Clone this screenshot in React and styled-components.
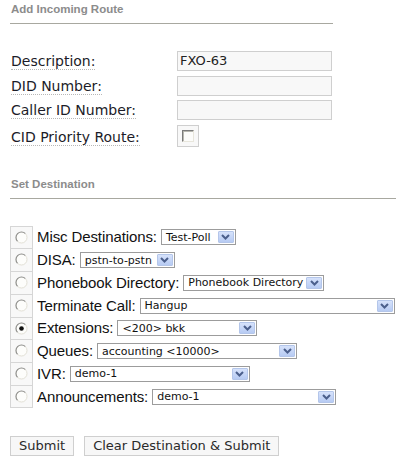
import React from 'react';
import styled, { createGlobalStyle } from 'styled-components';

const GlobalStyle = createGlobalStyle`
  body {
    margin: 0;
    background: #fff;
    font-family: "DejaVu Sans", Verdana, sans-serif;
  }
`;

const Page = styled.div`
  padding: 0 10px;
  width: 416px;
  box-sizing: border-box;
`;

const SectionTitle = styled.div`
  width: ${({ $width }) => $width}px;
  margin-top: ${({ $top }) => $top}px;
  padding: 2px 0 7px 1px;
  line-height: 14px;
  font-family: "Liberation Sans", Arial, sans-serif;
  font-weight: bold;
  font-size: 11.5px;
  color: #8c8c8c;
  border-bottom: 1px solid #a8a8a0;
`;

const FormGrid = styled.div`
  display: grid;
  grid-template-columns: 167px 155px;
  row-gap: 4.5px;
  margin-top: 27px;
  align-items: end;
`;

const Label = styled.span`
  justify-self: start;
  font-size: 14px;
  line-height: 15px;
  color: #1c1c28;
  border-bottom: 1px dotted #b8b8b8;
  margin-left: 1px;
  margin-bottom: 1px;
`;

const TextBox = styled.div`
  height: 20px;
  box-sizing: border-box;
  border: 1px solid #cfcfcf;
  background: #f8f8f8;
  font-size: 13px;
  line-height: 18px;
  padding-left: 2px;
  color: #222;
`;

const CheckWrap = styled.div`
  width: 22px;
  height: 22px;
  box-sizing: border-box;
  border: 1px solid #cfcfcf;
  background: #f8f8f8;
  display: flex;
  align-items: center;
  justify-content: center;
`;

const CheckBox = styled.span`
  width: 12px;
  height: 12px;
  box-sizing: border-box;
  border-top: 1px solid #7a7a7a;
  border-left: 1px solid #7a7a7a;
  border-right: 1px solid #e8e6dc;
  border-bottom: 1px solid #e8e6dc;
  background: #fcfcfa;
  box-shadow: inset 1px 1px 0 #b8b8b0;
  margin-top: 1px;
`;

const DestTable = styled.div`
  margin-top: 27px;
  display: flex;
  flex-direction: column;
`;

const DestRow = styled.div`
  display: flex;
  align-items: stretch;
  height: 22.75px;
`;

const RadioCell = styled.div`
  width: 23px;
  flex-shrink: 0;
  box-sizing: border-box;
  border: 1px solid #d6d6d6;
  border-bottom: ${({ $last }) => ($last ? '1px solid #d6d6d6' : 'none')};
  background: #f8f8f8;
  display: flex;
  justify-content: center;
  padding-top: 4px;
`;

const DestCell = styled.div`
  display: flex;
  align-items: center;
  padding-left: 4px;
  white-space: nowrap;
`;

const DestLabel = styled.span`
  font-family: "Liberation Sans", Arial, sans-serif;
  font-size: 15px;
  color: #111;
  margin-right: 4px;
  letter-spacing: -0.1px;
  flex-shrink: 0;
`;

const Select = styled.div`
  width: ${({ $width }) => $width}px;
  flex-shrink: 0;
  height: 16px;
  box-sizing: border-box;
  border: 1px solid #9c9c9c;
  background: #fff;
  display: flex;
  align-items: center;
  justify-content: space-between;
  font-size: 11px;
  color: #111;
  padding-left: 4px;
  margin-top: 1px;
`;

const Arrow = styled.span`
  width: 16px;
  height: 12px;
  margin-right: 1px;
  box-sizing: border-box;
  border: 1px solid #b4c6ea;
  border-radius: 1px;
  background: linear-gradient(#d6e2fb, #b7cbf3);
  display: flex;
  align-items: center;
  justify-content: center;
`;

const ButtonRow = styled.div`
  display: flex;
  gap: 10px;
  margin-top: 28px;
`;

const Button = styled.div`
  height: 20px;
  box-sizing: border-box;
  border: 1px solid #cfcfcf;
  background: #f7f7f7;
  font-size: 13px;
  line-height: 18px;
  color: #2a2a2a;
  padding: 0 ${({ $pad }) => $pad}px;
`;

function Radio({ checked }) {
  return (
    <svg width="13" height="13" viewBox="0 0 13 13">
      <circle cx="6.5" cy="6.5" r="5.5" fill="#fdfdfb" />
      <path d="M2.6 10.4 A5.5 5.5 0 0 1 10.4 2.6" fill="none" stroke="#8e8e8a" strokeWidth="1.2" />
      <path d="M10.4 2.6 A5.5 5.5 0 0 1 2.6 10.4" fill="none" stroke="#e2e0d6" strokeWidth="1" />
      {checked && <circle cx="6.5" cy="6.5" r="2.3" fill="#111" />}
    </svg>
  );
}

function Chevron() {
  return (
    <svg width="9" height="6" viewBox="0 0 9 6">
      <path d="M1 1 L4.5 4.5 L8 1" fill="none" stroke="#4b5f8c" strokeWidth="2" />
    </svg>
  );
}

const destinations = [
  { label: 'Misc Destinations:', value: 'Test-Poll', width: 75 },
  { label: 'DISA:', value: 'pstn-to-pstn', width: 95 },
  { label: 'Phonebook Directory:', value: 'Phonebook Directory', width: 141 },
  { label: 'Terminate Call:', value: 'Hangup', width: 255 },
  { label: 'Extensions:', value: '<200> bkk', width: 140, checked: true },
  { label: 'Queues:', value: 'accounting <10000>', width: 200 },
  { label: 'IVR:', value: 'demo-1', width: 180 },
  { label: 'Announcements:', value: 'demo-1', width: 184 },
];

export default function App() {
  return (
    <Page>
      <GlobalStyle />
      <SectionTitle $width={322} $top={0}>Add Incoming Route</SectionTitle>

      <FormGrid>
        <Label>Description:</Label>
        <TextBox>FXO-63</TextBox>
        <Label>DID Number:</Label>
        <TextBox />
        <Label>Caller ID Number:</Label>
        <TextBox />
        <Label>CID Priority Route:</Label>
        <CheckWrap><CheckBox /></CheckWrap>
      </FormGrid>

      <SectionTitle $width={385} $top={28}>Set Destination</SectionTitle>

      <DestTable>
        {destinations.map((d, i) => (
          <DestRow key={d.label}>
            <RadioCell $last={i === destinations.length - 1}>
              <Radio checked={d.checked} />
            </RadioCell>
            <DestCell>
              <DestLabel>{d.label}</DestLabel>
              <Select $width={d.width}>
                <span>{d.value}</span>
                <Arrow><Chevron /></Arrow>
              </Select>
            </DestCell>
          </DestRow>
        ))}
      </DestTable>

      <ButtonRow>
        <Button $pad={8}>Submit</Button>
        <Button $pad={8}>Clear Destination &amp; Submit</Button>
      </ButtonRow>
    </Page>
  );
}
